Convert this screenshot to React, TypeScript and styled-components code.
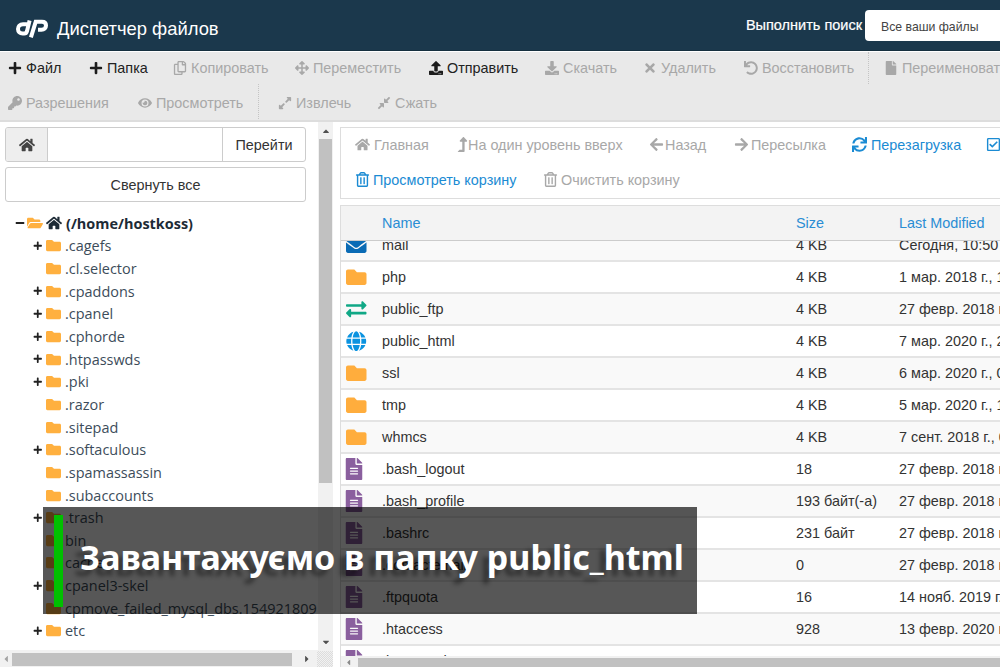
import React from 'react';
import styled, { createGlobalStyle } from 'styled-components';
import { FaHome, FaPlus, FaRegCopy, FaArrowsAlt, FaUpload, FaDownload, FaTimes, FaUndo, FaFile, FaKey, FaEye, FaExpandAlt, FaCompressAlt, FaArrowLeft, FaArrowRight, FaSync, FaRegCheckSquare, FaRegTrashAlt, FaLevelUpAlt, FaFolder, FaFolderOpen, FaEnvelope, FaGlobe, FaExchangeAlt, FaFileAlt, FaCaretUp, FaCaretDown, FaCaretLeft, FaCaretRight, FaMinus } from 'react-icons/fa';

const Global = createGlobalStyle`
  html, body { margin: 0; padding: 0; width: 1000px; height: 667px; overflow: hidden; background: #fff; }
  * { box-sizing: border-box; }
  body { font-family: "Liberation Sans", Arial, sans-serif; font-size: 14.4px; color: #333; }
`;
const Page = styled.div`position: relative; width: 1000px; height: 667px; overflow: hidden; display: flex; flex-direction: column;`;
const Header = styled.header`height: 51px; flex: none; background: #1b384c; border-bottom: 1px solid #16303f; display: flex; align-items: flex-start; color: #fff; overflow: hidden;`;
const Logo = styled.svg`width: 32px; height: 20px; margin: 18px 0 0 16px; flex: none;`;
const Title = styled.div`font-size: 18.4px; margin: 18px 0 0 9px; white-space: nowrap; flex: 1;`;
const SearchLabel = styled.div`font-size: 14.5px; margin: 17px 3px 0 0; white-space: nowrap; -webkit-text-stroke: .2px #fff;`;
const SearchBox = styled.div`width: 140px; height: 31px; margin: 10px -5px 0 0; background: #fff; border-radius: 4px 0 0 4px; color: #444; font-size: 12.25px; padding: 10px 16px 0; white-space: nowrap;`;
const Toolbar = styled.div`height: 71px; flex: none; background: #e9e9e9; border-top: 1px solid #fff; border-bottom: 2px solid #ddd; overflow: hidden;`;
const ToolRow = styled.div<{ $h: number }>`height: ${p => p.$h}px; display: flex; align-items: center; white-space: nowrap; padding-left: 8px;`;
const Tool = styled.div<{ $on?: boolean; $w: number }>`flex: none; width: ${p => p.$w}px; display: flex; align-items: center; gap: 4px; color: ${p => p.$on ? '#222' : '#a8a8a8'}; svg { flex: none; font-size: 14px; color: ${p => p.$on ? '#1c1c1c' : '#a8a8a8'}; }`;
const ToolSep = styled.div<{ $w: number }>`flex: none; width: ${p => p.$w}px; align-self: stretch; border-left: 1px dotted #c4c4c4;`;
const Main = styled.div`flex: 1; min-height: 0; display: flex;`;
const Side = styled.aside`width: 333px; flex: none; position: relative; display: flex; flex-direction: column; overflow: hidden; background: #fff;`;
const SideInner = styled.div`flex: 1; min-height: 0; display: flex;`;
const SideContent = styled.div`width: 318px; flex: none; padding: 5px 12px 0 5px; overflow: hidden;`;
const PathGroup = styled.div`height: 35px; display: flex; border: 1px solid #ccc; border-radius: 3px; overflow: hidden; width: 301px;`;
const PathHome = styled.div`width: 42px; flex: none; background: #eee; border-right: 1px solid #ccc; display: flex; align-items: center; justify-content: center; color: #444; font-size: 16px;`;
const PathInput = styled.div`flex: 1;`;
const PathGo = styled.div`width: 83px; flex: none; border-left: 1px solid #ccc; display: flex; align-items: center; justify-content: center; color: #333;`;
const Collapse = styled.div`width: 301px; height: 35px; margin-top: 5px; border: 1px solid #ccc; border-radius: 3px; display: flex; align-items: center; justify-content: center; color: #333;`;
const Tree = styled.div`margin-top: 10px; margin-left: 10px; font-family: "Open Sans", sans-serif; font-size: 14.45px; color: #2f4050;`;
const Node = styled.div<{ $root?: boolean }>`height: 22.65px; display: flex; align-items: center; white-space: nowrap; font-weight: ${p => p.$root ? 700 : 400}; color: ${p => p.$root ? '#1d2b36' : '#3c4c5a'};`;
const Toggle = styled.span<{ $root?: boolean }>`flex: none; width: 10px; margin-left: ${p => p.$root ? 0 : 18}px; display: flex; align-items: center; justify-content: center; font-size: ${p => p.$root ? 10 : 9.5}px; color: #222;`;
const FolderIcon = styled.span`flex: none; width: 15px; margin-left: 3px; margin-right: 4px; display: flex; color: #ffb03f; font-size: 15px;`;
const RootFolder = styled.span`flex: none; margin-left: 2px; margin-right: 3px; display: flex; color: #ffb03f; font-size: 16px;`;
const RootHome = styled.span`flex: none; margin-right: 4px; display: flex; color: #1d2b36; font-size: 16px;`;
const VBar = styled.div`width: 15px; flex: none; background: #f1f1f1; display: flex; flex-direction: column; align-items: center;`;
const VThumb = styled.div`width: 13px; height: 344px; background: #c1c1c1;`;
const ArrowBtn = styled.div`height: 17px; width: 15px; flex: none; display: flex; align-items: center; justify-content: center; font-size: 10px; color: #505050;`;
const HBar = styled.div`height: 17px; flex: none; background: #f1f1f1; display: flex; align-items: center; padding-top: 1px;`;
const HArrow = styled.div<{ $dark?: boolean }>`width: 12px; flex: none; display: flex; align-items: center; justify-content: center; font-size: 10px; color: ${p => p.$dark ? '#505050' : '#a3a3a3'};`;
const HThumb = styled.div`width: 280px; height: 13px; background: #c1c1c1;`;
const HSpacer = styled.div`flex: 1;`;
const Corner = styled.div`width: 16px; height: 17px; flex: none; margin-left: 4px; background: repeating-conic-gradient(#dcdcdc 0 25%, #f1f1f1 0 50%) 0 0 / 2px 2px;`;
const Content = styled.main`flex: 1; min-width: 0; padding: 5px 0 0 7px; display: flex; flex-direction: column; overflow: hidden;`;
const Actions = styled.div`height: 72px; flex: none; border: 1px solid #ddd; border-right: 0; padding-left: 14px;`;
const ActionRow = styled.div<{ $h: number }>`height: ${p => p.$h}px; display: flex; align-items: center; white-space: nowrap;`;
const Action = styled.div<{ $blue?: boolean; $w: number; $gap?: number }>`flex: none; width: ${p => p.$w}px; display: flex; align-items: center; gap: ${p => p.$gap ?? 4}px; color: ${p => p.$blue ? '#1b8bd3' : '#a8a8a8'}; svg { flex: none; font-size: 15px; }`;
const UpAction = styled(Action)`svg { margin: 0 -2px 0 -1px; }`;
const TableBox = styled.div`flex: 1; min-height: 0; margin-top: 6px; border-left: 1px solid #ddd; display: flex; flex-direction: column; overflow: hidden; position: relative;`;
const THead = styled.div`height: 36px; flex: none; background: #f3f3f3; border-top: 1px solid #ddd; border-bottom: 1px solid #ccc; display: flex; align-items: center; color: #2a8dd4; position: relative; z-index: 1;`;
const Rows = styled.div`flex: 1; min-height: 0; overflow: hidden;`;
const RowsInner = styled.div`margin-top: -11px;`;
const Row = styled.div<{ $odd: boolean }>`height: 32px; display: flex; align-items: center; background: ${p => p.$odd ? '#f9f9f9' : '#fff'}; border-bottom: 2px solid #e4e4e4; white-space: nowrap; color: #333;`;
const IconCell = styled.div<{ $c: string; $file?: boolean }>`width: 41px; flex: none; padding-left: ${p => p.$file ? 2 : 5}px; display: flex; color: ${p => p.$c}; font-size: ${p => p.$file ? 22 : 20.5}px;`;
const NameCell = styled.div`width: 414px; flex: none;`;
const SizeCell = styled.div`width: 103px; flex: none;`;
const DateCell = styled.div`flex: 1; overflow: hidden;`;
const BottomTrack = styled.div`height: 11px; flex: none; background: #f1f1f1; padding: 2px 0 0 17px; display: flex; position: relative;`;
const BottomArrow = styled.div`position: absolute; left: 3px; top: 2px; font-size: 9px; color: #8a8a8a; display: flex;`;
const BottomThumb = styled.div`flex: 1; background: #c1c1c1;`;
const Banner = styled.div`position: absolute; left: 43px; top: 507px; width: 654px; height: 107px; background: rgba(0,0,0,.66); z-index: 5; display: flex; align-items: center;`;
const GreenBar = styled.div`position: absolute; left: 11px; top: 8px; width: 9px; height: 92px; background: #00c000;`;
const BannerText = styled.div`margin-left: 37px; margin-top: -8px; font-family: "Noto Sans", sans-serif; font-weight: 700; font-size: 34px; line-height: 1; color: #fff; white-space: nowrap; text-shadow: -6px 6px 4px rgba(0,0,0,.4);`;

const I: Record<string, React.ReactNode> = {
  folder: <FaFolder />, mail: <FaEnvelope />, ftp: <FaExchangeAlt />, globe: <FaGlobe />, file: <FaFileAlt />,
};
const C: Record<string, string> = { folder: '#ffad3d', mail: '#0a6bb5', ftp: '#10a886', globe: '#0b93e0', file: '#8a5f9e' };

const tree: [string, boolean][] = [
  ['.cagefs', true], ['.cl.selector', false], ['.cpaddons', true], ['.cpanel', true], ['.cphorde', true], ['.htpasswds', true], ['.pki', true], ['.razor', false], ['.sitepad', false], ['.softaculous', true], ['.spamassassin', false], ['.subaccounts', false], ['.trash', true], ['bin', false], ['cache', false], ['cpanel3-skel', true], ['cpmove_failed_mysql_dbs.154921809', false], ['etc', true],
];
const rows: [string, string, string, string][] = [
  ['mail', 'mail', '4 KB', 'Сегодня, 10:50'], ['folder', 'php', '4 KB', '1 мар. 2018 г., 10:20'], ['ftp', 'public_ftp', '4 KB', '27 февр. 2018 г., 12:15'], ['globe', 'public_html', '4 KB', '7 мар. 2020 г., 21:33'], ['folder', 'ssl', '4 KB', '6 мар. 2020 г., 04:10'], ['folder', 'tmp', '4 KB', '5 мар. 2020 г., 16:12'], ['folder', 'whmcs', '4 KB', '7 сент. 2018 г., 09:41'], ['file', '.bash_logout', '18', '27 февр. 2018 г., 12:15'], ['file', '.bash_profile', '193 байт(-а)', '27 февр. 2018 г., 12:15'], ['file', '.bashrc', '231 байт', '27 февр. 2018 г., 12:15'], ['file', '.contactemail', '0', '27 февр. 2018 г., 12:15'], ['file', '.ftpquota', '16', '14 нояб. 2019 г., 08:21'], ['file', '.htaccess', '928', '13 февр. 2020 г., 11:02'], ['file', '.htpasswd', '247', '5 марта 2020 г., 16:02'],
];

export default function App() {
  return (
    <Page>
      <Global />
      <Header>
        <Logo viewBox="0 0 32 20">
          <g fill="none" stroke="#fff" strokeWidth="4">
            <path d="M12.500 6.200H7C3.800 6.200 2 8.300 2 11C2 13.700 3.900 15.500 6.600 15.500H8.300C9.700 15.500 10.500 14.800 10.900 13.400L13.600 2.500" />
            <path d="M14.900 19.300L19.700 3.800H26C28.700 3.800 30 5.300 30 7.500C30 10.100 28.200 11.800 25.500 11.800H22" />
          </g>
        </Logo>
        <Title>Диспетчер файлов</Title>
        <SearchLabel>Выполнить поиск</SearchLabel>
        <SearchBox>Все ваши файлы</SearchBox>
      </Header>
      <Toolbar>
        <ToolRow $h={32}>
          <Tool $on $w={81}><FaPlus />Файл</Tool>
          <Tool $on $w={84}><FaPlus />Папка</Tool>
          <Tool $w={122}><FaRegCopy />Копировать</Tool>
          <Tool $w={134}><FaArrowsAlt />Переместить</Tool>
          <Tool $on $w={116}><FaUpload />Отправить</Tool>
          <Tool $w={98}><FaDownload />Скачать</Tool>
          <Tool $w={101}><FaTimes />Удалить</Tool>
          <Tool $w={124}><FaUndo />Восстановить</Tool>
          <ToolSep $w={16} />
          <Tool $w={140}><FaFile />Переименовать</Tool>
        </ToolRow>
        <ToolRow $h={37}>
          <Tool $w={130}><FaKey />Разрешения</Tool>
          <Tool $w={120}><FaEye />Просмотреть</Tool>
          <ToolSep $w={20} />
          <Tool $w={99}><FaExpandAlt />Извлечь</Tool>
          <Tool $w={90}><FaCompressAlt />Сжать</Tool>
        </ToolRow>
      </Toolbar>
      <Main>
        <Side>
          <SideInner>
            <SideContent>
              <PathGroup><PathHome><FaHome /></PathHome><PathInput /><PathGo>Перейти</PathGo></PathGroup>
              <Collapse>Свернуть все</Collapse>
              <Tree>
                <Node $root><Toggle $root><FaMinus /></Toggle><RootFolder><FaFolderOpen /></RootFolder><RootHome><FaHome /></RootHome>(/home/hostkoss)</Node>
                {tree.map(([n, t]) => (
                  <Node key={n}><Toggle>{t && <FaPlus />}</Toggle><FolderIcon><FaFolder /></FolderIcon>{n}</Node>
                ))}
              </Tree>
            </SideContent>
            <VBar>
              <ArrowBtn><FaCaretUp /></ArrowBtn>
              <VThumb />
              <HSpacer />
              <ArrowBtn><FaCaretDown /></ArrowBtn>
            </VBar>
          </SideInner>
          <HBar><HArrow><FaCaretLeft /></HArrow><HThumb /><HSpacer /><HArrow $dark><FaCaretRight /></HArrow><Corner /></HBar>
        </Side>
        <Content>
          <Actions>
            <ActionRow $h={33}>
              <Action $w={101}><FaHome />Главная</Action>
              <UpAction $w={193} $gap={0}><FaLevelUpAlt />На один уровень вверх</UpAction>
              <Action $w={85} $gap={1}><FaArrowLeft />Назад</Action>
              <Action $w={118} $gap={2}><FaArrowRight />Пересылка</Action>
              <Action $blue $w={134}><FaSync />Перезагрузка</Action>
              <Action $blue $w={30}><FaRegCheckSquare /></Action>
            </ActionRow>
            <ActionRow $h={37}>
              <Action $blue $w={188} $gap={3}><FaRegTrashAlt />Просмотреть корзину</Action>
              <Action $w={180} $gap={3}><FaRegTrashAlt />Очистить корзину</Action>
            </ActionRow>
          </Actions>
          <TableBox>
            <THead><IconCell $c="#000" /><NameCell>Name</NameCell><SizeCell>Size</SizeCell><DateCell>Last Modified</DateCell></THead>
            <Rows>
              <RowsInner>
                {rows.map(([i, n, s, d], k) => (
                  <Row key={n} $odd={k % 2 === 0}>
                    <IconCell $c={C[i]} $file={i === 'file'}>{I[i]}</IconCell><NameCell>{n}</NameCell><SizeCell>{s}</SizeCell><DateCell>{d}</DateCell>
                  </Row>
                ))}
              </RowsInner>
            </Rows>
            <BottomTrack><BottomArrow><FaCaretLeft /></BottomArrow><BottomThumb /></BottomTrack>
          </TableBox>
        </Content>
      </Main>
      <Banner><GreenBar /><BannerText>Завантажуємо в папку public_html</BannerText></Banner>
    </Page>
  );
}
